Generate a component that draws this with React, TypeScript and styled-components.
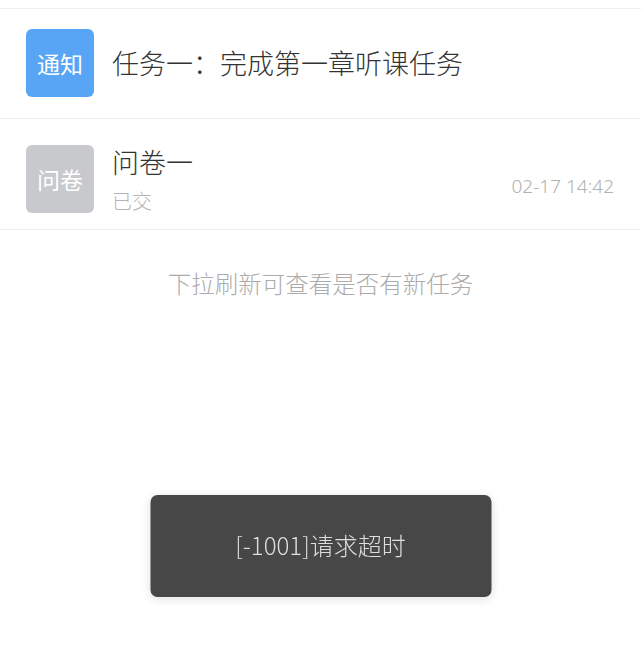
import React from 'react';
import styled, { createGlobalStyle } from 'styled-components';

const GlobalStyle = createGlobalStyle`
    html, body {
        margin: 0;
        padding: 0;
        background: #ffffff;
    }
    body {
        font-family: "Noto Sans CJK SC", "Noto Sans", sans-serif;
        color: #333333;
    }
`

const Page = styled.div`
    min-height: 669px;
    padding-top: 8px;
    box-sizing: border-box;
`

const List = styled.div`
    border-top: 1px solid #ededed;
`

const Row = styled.div<{ $top: number; $bottom: number; $align: string }>`
    display: flex;
    align-items: ${p => p.$align};
    padding: ${p => p.$top}px 26px ${p => p.$bottom}px 26px;
    border-bottom: 1px solid #ededed;
`

const Badge = styled.div<{ $color: string }>`
    flex: none;
    width: 68px;
    height: 68px;
    border-radius: 6px;
    background: ${p => p.$color};
    color: #ffffff;
    font-size: 23px;
    display: flex;
    align-items: center;
    justify-content: center;
`

const Body = styled.div`
    flex: 1;
    margin-left: 18px;
    display: flex;
    flex-direction: column;
    gap: 9px;
`

const Title = styled.div`
    font-size: 27px;
    line-height: 34px;
    font-weight: 300;
    color: #333333;
`

const Sub = styled.div`
    font-size: 20px;
    line-height: 26px;
    font-weight: 300;
    color: #b3b3b3;
`

const Time = styled.div`
    align-self: center;
    margin-top: 12px;
    margin-right: 1px;
    font-family: "Noto Sans", "Liberation Sans", sans-serif;
    font-size: 19px;
    font-weight: 300;
    color: #b1b1b1;
`

const Hint = styled.div`
    margin-top: 37px;
    text-align: center;
    font-size: 23.5px;
    line-height: 32px;
    font-weight: 300;
    color: #ababab;
`

const Toast = styled.div`
    position: fixed;
    left: 50%;
    top: 495px;
    transform: translateX(-50%);
    width: 341px;
    height: 102px;
    border-radius: 7px;
    background: #474747;
    box-shadow: 0 2px 10px rgba(0, 0, 0, 0.12);
    display: flex;
    align-items: center;
    justify-content: center;
    padding-bottom: 4px;
    box-sizing: border-box;
    color: #dedede;
    font-size: 24px;
    font-weight: 300;
`

export default function App() {
    return (
        <Page>
            <GlobalStyle />
            <List>
                <Row $top={20} $bottom={21} $align="center">
                    <Badge $color="#58a5f5">通知</Badge>
                    <Body>
                        <Title>任务一：完成第一章听课任务</Title>
                    </Body>
                </Row>
                <Row $top={26} $bottom={15} $align="flex-start">
                    <Badge $color="#c7c9cc">问卷</Badge>
                    <Body>
                        <Title>问卷一</Title>
                        <Sub>已交</Sub>
                    </Body>
                    <Time>02-17 14:42</Time>
                </Row>
            </List>
            <Hint>下拉刷新可查看是否有新任务</Hint>
            <Toast>[-1001]请求超时</Toast>
        </Page>
    );
}
